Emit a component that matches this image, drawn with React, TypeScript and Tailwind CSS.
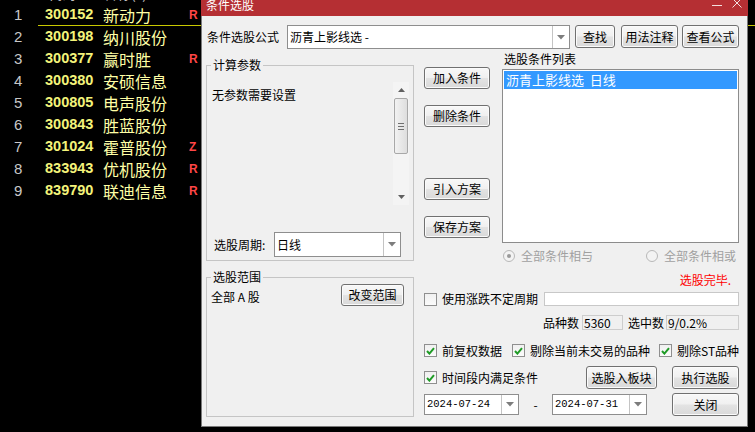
import type { ReactNode } from "react";

const rows = [
  ["1", "300152", "新动力", "R"],
  ["2", "300198", "纳川股份", ""],
  ["3", "300377", "赢时胜", "R"],
  ["4", "300380", "安硕信息", ""],
  ["5", "300805", "电声股份", ""],
  ["6", "300843", "胜蓝股份", ""],
  ["7", "301024", "霍普股份", "Z"],
  ["8", "833943", "优机股份", "R"],
  ["9", "839790", "联迪信息", "R"],
];

const cjk = "font-['Noto_Sans_CJK_SC','Noto_Sans',sans-serif]";

const Btn = ({ w, h = "h-[22px]", children }: { w: string; h?: string; children: ReactNode }) => (
  <div
    className={`${w} ${h} flex items-center justify-center rounded-[3px] border border-[#707070] bg-[linear-gradient(#f8f8f8_0%,#f0f0f0_48%,#e3e3e3_52%,#d9d9d9_100%)] shadow-[inset_0_0_0_1px_#fbfbfb] text-[12px] leading-none text-black`}
  >
    {children}
  </div>
);

const Arrow = () => (
  <svg width="8" height="5" viewBox="0 0 8 5">
    <path d="M0 0h8L4 4.5z" fill="#7d7d7d" />
  </svg>
);

const Combo = ({ w, h, text, mono }: { w: string; h: string; text: string; mono?: boolean }) => (
  <div className={`${w} ${h} flex border border-[#8e8e8e] bg-white`}>
    <div
      className={`flex-1 flex items-center pl-[2px] ${
        mono ? "font-['Liberation_Mono',monospace] text-[10.5px]" : "text-[12px]"
      }`}
    >
      {text}
    </div>
    <div className="w-[17px] flex items-center justify-center border-l border-[#c4c4c4]">
      <Arrow />
    </div>
  </div>
);

const Check = ({ on }: { on?: boolean }) => (
  <div className="w-[13px] h-[13px] shrink-0 border border-[#8f8f8f] bg-[linear-gradient(#f0f0f0,#fbfbfb)] flex items-center justify-center">
    {on && (
      <svg width="9" height="8" viewBox="0 0 9 8">
        <path d="M1 4l2.4 2.6L8 1.2" stroke="#1f9b26" strokeWidth="2" fill="none" />
      </svg>
    )}
  </div>
);

const Radio = ({ on }: { on?: boolean }) => (
  <div className="w-[12px] h-[12px] rounded-full border border-[#b8b8b8] bg-[#f3f3f3] flex items-center justify-center">
    {on && <div className="w-[4px] h-[4px] rounded-full bg-[#9a9a9a]" />}
  </div>
);

export default function App() {
  return (
    <div className={`relative w-[755px] h-[432px] overflow-hidden bg-black ${cjk}`}>
      {/* stock list behind the dialog */}
      <div className="mt-[-18px] w-[755px]">
        <div className="flex h-[22px] items-center text-[14px] text-[#c0c0c0]">
          <div className="w-[48px]" />
          <div className="w-[55px]">代码</div>
          <div>名称(?)</div>
        </div>
        {rows.map(([n, code, name, flag], i) => (
          <div key={code} className="flex h-[22px] items-center">
            <div className="w-[38px] pl-[14px] font-['Liberation_Sans',sans-serif] text-[15px] text-[#c8c8c8]">
              {n}
            </div>
            <div
              className={`flex-1 h-full flex items-center ${
                i === 0 ? "border-b border-[#c8c800]" : ""
              }`}
            >
              <div className="w-[65px] pl-[7px] font-['Liberation_Sans',sans-serif] font-bold text-[14.5px] text-[#f4f47a]">
                {code}
              </div>
              <div className="w-[86px] text-[16px] text-[#ffffa6] leading-none">{name}</div>
              <div className="font-['Liberation_Sans',sans-serif] font-bold text-[12px] text-[#ff4646]">
                {flag}
              </div>
            </div>
          </div>
        ))}
      </div>

      {/* dialog window */}
      <div className="absolute left-[201px] top-[-6px] w-[547px]">
        <div className="h-[22px] bg-[#b52f33] flex items-center pl-[5px] pr-[6px] text-[12px] text-white">
          <span>条件选股</span>
          <svg className="ml-auto" width="10" height="10" viewBox="0 0 10 10">
            <path d="M0 5.5h10" stroke="#f3dede" strokeWidth="1" />
          </svg>
          <svg className="ml-[10px] mb-[4px]" width="10" height="10" viewBox="0 0 10 10">
            <path d="M0.5 0.5l9 9M9.5 0.5l-9 9" stroke="#f3dede" strokeWidth="1" />
          </svg>
        </div>

        <div className="h-[411px] bg-[#f0f0f0] border-x border-b border-[#7a7a7a] pl-[4px] pt-[9px] text-[12px] text-black">
          {/* formula row */}
          <div className="flex items-start">
            <div className="w-[81px] h-[24px] pl-[1px] flex items-center">条件选股公式</div>
            <Combo w="w-[283px]" h="h-[24px]" text="沥青上影线选 -" />
            <div className="ml-[5px]">
              <Btn w="w-[40px]" h="h-[23px]">查找</Btn>
            </div>
            <div className="ml-[6px]">
              <Btn w="w-[57px]" h="h-[23px]">用法注释</Btn>
            </div>
            <div className="ml-[4px]">
              <Btn w="w-[57px]" h="h-[23px]">查看公式</Btn>
            </div>
          </div>

          <div className="flex">
            {/* left column */}
            <div className="w-[208px]">
              <fieldset className="mt-[9px] h-[203px] border border-[#c5c5c5]">
                <legend className="ml-[4px] px-[2px] leading-[14px]">计算参数</legend>
                <div className="mt-[10px] h-[123px] w-[202px] flex">
                  <div className="flex-1 pl-[5px] pt-[5px] leading-[16px]">无参数需要设置</div>
                  <div className="w-[16px] flex flex-col items-center bg-[#f4f4f4]">
                    <svg className="mt-[6px]" width="7" height="4" viewBox="0 0 7 4">
                      <path d="M0 4h7L3.5 0z" fill="#606060" />
                    </svg>
                    <div className="mt-[6px] w-[14px] h-[56px] rounded-[2px] border border-[#a8a8a8] bg-[linear-gradient(90deg,#f2f2f2,#dedede)] flex flex-col items-center justify-center gap-[2px]">
                      <div className="w-[6px] h-px bg-[#707070]" />
                      <div className="w-[6px] h-px bg-[#707070]" />
                      <div className="w-[6px] h-px bg-[#707070]" />
                    </div>
                    <svg className="mt-auto mb-[6px]" width="7" height="4" viewBox="0 0 7 4">
                      <path d="M0 0h7L3.5 4z" fill="#606060" />
                    </svg>
                  </div>
                </div>
                <div className="mt-[27px] flex items-center h-[25px]">
                  <div className="w-[67px] pl-[7px]">选股周期:</div>
                  <Combo w="w-[127px]" h="h-[25px]" text="日线" />
                </div>
              </fieldset>

              <fieldset className="mt-[9px] h-[147px] border border-[#c5c5c5]">
                <legend className="ml-[4px] px-[2px] leading-[14px]">选股范围</legend>
                <div className="flex items-center h-[22px]">
                  <div className="pl-[4px] pt-[3px]">全部 A 股</div>
                  <div className="ml-auto mr-[9px]">
                    <Btn w="w-[63px]">改变范围</Btn>
                  </div>
                </div>
              </fieldset>
            </div>

            {/* right area */}
            <div className="ml-[10px] w-[315px]">
              <div className="flex h-[214px]">
                <div className="w-[66px]">
                  <div className="mt-[18px]">
                    <Btn w="w-[66px]">加入条件</Btn>
                  </div>
                  <div className="mt-[16px]">
                    <Btn w="w-[66px]">删除条件</Btn>
                  </div>
                  <div className="mt-[51px]">
                    <Btn w="w-[66px]">引入方案</Btn>
                  </div>
                  <div className="mt-[16px]">
                    <Btn w="w-[66px]">保存方案</Btn>
                  </div>
                </div>
                <div className="ml-[12px] w-[237px]">
                  <div className="mt-[2px] h-[16px] leading-[16px] pl-[2px]">选股条件列表</div>
                  <div className="mt-[2px] h-[174px] border border-[#8c8c8c] bg-white p-px">
                    <div className="h-[18px] bg-[#3399ff] text-white text-[13px] leading-[18px] pl-[2px] whitespace-pre">
                      沥青上影线选  日线
                    </div>
                  </div>
                  <div className="mt-[6px] h-[14px] flex items-center text-[#a0a0a0]">
                    <div className="w-[144px] flex items-center pl-[1px]">
                      <Radio on />
                      <span className="ml-[6px]">全部条件相与</span>
                    </div>
                    <Radio />
                    <span className="ml-[6px]">全部条件相或</span>
                  </div>
                </div>
              </div>

              <div className="mt-[9px] h-[16px] leading-[16px] text-right pr-[8px] text-[#ff0000]">选股完毕.</div>

              <div className="mt-[4px] h-[14px] flex items-center">
                <Check />
                <span className="ml-[5px]">使用涨跌不定周期</span>
                <div className="ml-auto w-[195px] h-[14px] border border-[#c8c8c8] bg-white" />
              </div>

              <div className="mt-[9px] h-[15px] flex items-center justify-end">
                <span>品种数</span>
                <div className="ml-[3px] w-[41px] h-[15px] border border-[#cdcdcd] pl-[1px] leading-[13px]">5360</div>
                <span className="ml-[5px]">选中数</span>
                <div className="ml-[2px] w-[73px] h-[15px] border border-[#cdcdcd] pl-[1px] leading-[13px]">9/0.2%</div>
              </div>

              <div className="mt-[14px] h-[13px] flex items-center whitespace-nowrap">
                <Check on />
                <span className="ml-[5px]">前复权数据</span>
                <div className="ml-[10px]">
                  <Check on />
                </div>
                <span className="ml-[5px]">剔除当前未交易的品种</span>
                <div className="ml-[9px]">
                  <Check on />
                </div>
                <span className="ml-[5px]">剔除ST品种</span>
              </div>

              <div className="mt-[9px] h-[23px] flex items-center">
                <Check on />
                <span className="ml-[5px]">时间段内满足条件</span>
                <div className="ml-auto">
                  <Btn w="w-[71px]" h="h-[23px]">选股入板块</Btn>
                </div>
                <div className="ml-[15px]">
                  <Btn w="w-[67px]" h="h-[23px]">执行选股</Btn>
                </div>
              </div>

              <div className="mt-[4px] h-[23px] flex items-center">
                <Combo w="w-[95px]" h="h-[21px]" text="2024-07-24" mono />
                <div className="w-[33px] text-center">-</div>
                <Combo w="w-[95px]" h="h-[21px]" text="2024-07-31" mono />
                <div className="ml-auto">
                  <Btn w="w-[67px]" h="h-[23px]">关闭</Btn>
                </div>
              </div>
            </div>
          </div>
        </div>
      </div>
    </div>
  );
}
